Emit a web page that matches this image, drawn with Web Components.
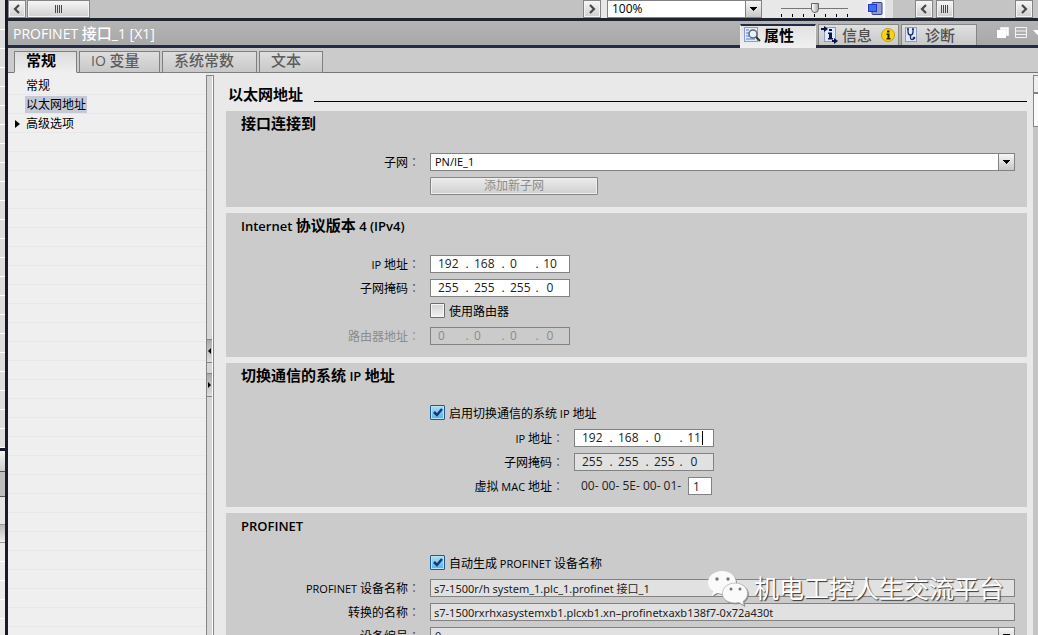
<!DOCTYPE html>
<html lang="zh-CN">
<head>
<meta charset="utf-8">
<title>PROFINET 接口_1 [X1]</title>
<style>
html, body { margin: 0; height: 100%; overflow: hidden; }
body { font-family: "Open Sans", "Noto Sans CJK SC", sans-serif; font-size: 12px; color: #000; background: #c9c9c9; }
</style>
</head>
<body>
<device-editor></device-editor>
<script>
const base = `
*, *::before, *::after { box-sizing: border-box; }
input, select, button { font: inherit; color: inherit; margin: 0; }
button { border: 0; background: none; padding: 0; }
.l { font-size: var(--latin, 11px); }
`;
/* Latin runs are set a little smaller than the Chinese text around them. */
const runs = t => t.replace(/[\x20-\x7e]+/g, m => `<span class="l">${m}</span>`);
const labelText = t => `${runs(t)}<span class="colon" lang="zh-Hant">：</span>`;

class Base extends HTMLElement {
  connectedCallback() {
    if (this.shadowRoot) return;
    this.attachShadow({ mode: 'open' }).innerHTML = `<style>${base}${this.css()}</style>${this.html()}`;
  }
  attr(n) { return this.getAttribute(n) || ''; }
  css() { return ''; }
  html() { return '<slot></slot>'; }
}
const define = (name, cls) => customElements.define(name, cls);

/* ---------- scroll bar pieces ---------- */
define('scroll-button', class extends Base {
  css() { return `
    :host { display: block; flex: none; width: 18px; height: 18px; }
    :host([kind=thumb][wide]) { width: 63px; }
    button { display: flex; align-items: center; justify-content: center; width: 100%; height: 100%;
      border: 1px solid #858585; background: linear-gradient(#f6f6f6, #cfcfcf); box-shadow: inset 0 0 0 1px #f4f4f4; }
    svg { display: block; fill: none; stroke: #484848; }`; }
  html() {
    const k = this.attr('kind');
    const d = { left: 'M8 2 4 6l4 4', right: 'M4 2l4 4-4 4', thumb: 'M2.5 2v8M4.5 2v8M6.5 2v8M8.5 2v8' }[k];
    return `<button aria-label="${k}"><svg width="12" height="12"><path d="${d}" stroke-width="${k === 'thumb' ? 1 : 2.2}"/></svg></button>`;
  }
});

define('top-bar', class extends Base {
  css() { return `
    :host { display: flex; height: 18px; background: #c2c2c2; }
    .track { display: flex; gap: 1px; }
    .canvas { flex: 1; justify-content: space-between; }
    .canvas div { display: flex; gap: 1px; }
    .zoom { display: flex; gap: 19px; background: #e8e8e8; padding-left: 6px; }
    drop-down { width: 155px; }
    .slider { width: 67px; position: relative; }
    .slider svg { display: block; }
    input { appearance: none; -webkit-appearance: none; position: absolute; inset: 0; width: 67px; height: 16px; background: none; }
    input::-webkit-slider-thumb { appearance: none; -webkit-appearance: none; width: 8px; height: 10px; background: linear-gradient(90deg,#fff,#aaa); border: 1px solid #666; border-radius: 0 0 4px 4px; }
    .fit { width: 18px; height: 18px; background: linear-gradient(#f2f2f2,#e8e8e8); border-right: 2px solid #fff; }
    .fit svg { display: block; }
    .side { width: 153px; padding-left: 6px; background: linear-gradient(90deg,#e2e2e2 8px,#c4c4c4 8px); }
    .side .track { gap: 3px; padding: 0 0 0 24px; }
    .side scroll-button:last-child { margin-left: auto; margin-right: 5px; }`; }
  html() { return `
    <div class="track canvas"><div><scroll-button kind="left"></scroll-button><scroll-button kind="thumb" wide></scroll-button></div><scroll-button kind="right"></scroll-button></div>
    <div class="zoom">
      <drop-down value="100%" name="缩放" zoom></drop-down>
      <div class="slider">
        <svg width="67" height="18" stroke="#000"><path d="M0 8.5h67" stroke="#777"/><path d="M.5 14v3M11.5 14v3M22.5 14v3M33.5 14v3M44.5 14v3M55.5 14v3M66.5 14v3"/></svg>
        <input type="range" aria-label="缩放级别" value="50">
      </div>
      <button class="fit" aria-label="适合窗口"><svg width="16" height="18"><rect x="5" y="2.500" width="10" height="12" rx="1" fill="#8f9bd2" stroke="#34408c"/><rect x="1.500" y="4.500" width="8" height="7" fill="#3f6cff" stroke="#2038c0"/></svg></button>
    </div>
    <div class="side"><div class="track"><scroll-button kind="left"></scroll-button><scroll-button kind="thumb"></scroll-button><scroll-button kind="right"></scroll-button></div></div>`; }
});

/* ---------- title bar ---------- */
const icons = {
  props: `<svg width="18" height="18"><rect x="1.500" y="1.500" width="13" height="14" fill="#dfe9fb" stroke="#8d9cc4"/><path d="M3 4h3M3 7h3M3 10h3M3 13h9" stroke="#4f7fd0"/><circle cx="10" cy="8" r="4" fill="#e6f2ff" stroke="#666" stroke-width="1.500"/><path d="M13 11l4 4" stroke="#333" stroke-width="2"/></svg>`,
  info: `<svg width="18" height="18"><rect x="3.500" y="1.500" width="11" height="14" fill="#dfe9fb" stroke="#8d9cc4"/><path d="M0 3h4M11 15h4" stroke="#0b1148" stroke-width="2"/><path d="M3 0l4 3-4 3zM13 12l4 3-4 3z" fill="#0b1148"/><path d="M8 3h3v2H8zM7 6.500h4V12h1v1.500H7V12h1V8H7z" fill="#0b1148"/></svg>`,
  diag: `<svg width="18" height="18"><rect x="1.500" y="1.500" width="11" height="14" fill="#dfe9fb" stroke="#8d9cc4"/><path d="M4 3v3c0 4 5 4 5 0V3M3 3h2M8 3h2M6.500 9v3c0 2 3 2 3.500 0" fill="none" stroke="#1c2c62" stroke-width="1.300"/><circle cx="10" cy="12" r="1.300" fill="#1c2c62"/></svg>`,
};
define('pane-tab', class extends Base {
  css() { return `
    :host { display: block; flex: none; height: 21px; margin-right: 2px; }
    button { display: flex; align-items: center; gap: 3px; width: 100%; height: 100%; padding: 0 0 1px 2px; font-size: 15px; font-weight: 500; line-height: 18px; color: #505050;
      background: linear-gradient(#e0e0e0, #c8c8c8); border: 1px solid #858585; border-width: 1px 1px 0 1px; white-space: nowrap; }
    :host([active]) { height: 24px; }
    :host([active]) button { background: linear-gradient(#e2e2e2,#f0f0f0); font-weight: 700; color: #000; border-color: #262b44 #efefef; border-top-width: 2px; padding-bottom: 5px; }
    svg { flex: none; }
    .badge { margin-left: 6px; }`; }
  html() {
    const badge = this.hasAttribute('badge') ? `<svg class="badge" width="14" height="14"><circle cx="7" cy="7" r="6.500" fill="#f7d514" stroke="#c79c00"/><path d="M6 2.500h2.500v2H6zM5.500 5.500h3V10h1v1.500h-4V10h1V7h-1z" fill="#222"/></svg>` : '';
    return `<button>${icons[this.attr('icon')]}<span><slot></slot></span>${badge}</button>`;
  }
});
define('title-bar', class extends Base {
  css() { return `
    :host { display: flex; align-items: flex-start; height: 27px; border-bottom: 3px solid #262b44; background: linear-gradient(#b4b4b4, #a8a8a8); --latin: 14px; }
    h1 { flex: 1; margin: 0; padding-left: 5px; font-size: 15px; line-height: 24px; font-weight: 500; color: #fff; white-space: nowrap; }
    .tabs { display: flex; padding-top: 3px; }
    .a { width: 76px; } .b { width: 81px; } .c { width: 76px; }
    .tools { display: flex; gap: 6px; padding: 6px 0 0 18px; width: 59px; overflow: hidden; }
    .tools button { flex: none; } svg { display: block; }`; }
  html() { return `
    <h1>${runs('PROFINET 接口_1 [X1]')}</h1>
    <div class="tabs"><pane-tab class="a" icon="props" active>属性</pane-tab><pane-tab class="b" icon="info" badge>信息</pane-tab><pane-tab class="c" icon="diag">诊断</pane-tab></div>
    <div class="tools">
      <button aria-label="浮动"><svg width="12" height="12"><path d="M3.500.5h8v8h-2v-6h-6z" fill="#fff" stroke="#eee"/><path d="M0 3h9v8H0z" fill="#fff"/></svg></button>
      <button aria-label="布局"><svg width="12" height="12"><path d="M.5.500h11v10H.500zM1 4h10M1 7.500h10" fill="none" stroke="#f4f4f4"/></svg></button>
      <button aria-label="折叠"><svg width="12" height="12"><path d="M0 3h9l-4.500 5z" fill="#fff"/></svg></button>
    </div>`; }
});

/* ---------- property tabs ---------- */
define('tab-strip', class extends Base {
  css() { return `
    :host { display: flex; align-items: flex-end; gap: 2px; height: 25px; padding-left: 6px; background: linear-gradient(#777,#777) 0 100% / 100% 1px no-repeat #cbcbcb; --latin: 14px; }
    button { height: 22px; padding: 0 0 3px 11px; border: 1px solid #808080; background: linear-gradient(#dedede,#c8c8c8); color: #5c5c5c; font-size: 15px; font-weight: 500; line-height: 17px; text-align: left; white-space: nowrap; }
    button.on { background: linear-gradient(#dcdcdc,#efefef); border-bottom-color: #efefef; color: #000; font-weight: 700; width: 63px; }
    .w81 { width: 81px; } .w95 { width: 95px; } .w64 { width: 64px; }`; }
  html() { return `<button class="on">常规</button><button class="w81">${runs('IO 变量')}</button><button class="w95">系统常数</button><button class="w64">文本</button>`; }
});

define('side-nav', class extends Base {
  css() { return `
    :host { display: block; width: 198px; padding-top: 3px; background: repeating-linear-gradient(#efefef 0 18px, #e8e8e8 18px 19px) 0 3px #efefef; }
    ul { list-style: none; margin: 0; padding: 0; }
    li { display: flex; align-items: center; height: 19px; }
    .mark { width: 17px; padding-left: 7px; } svg { display: block; }
    a { color: #000; text-decoration: none; line-height: 17px; padding: 0 1px; }
    a.on { background: #c3cad6; }`; }
  html() { return `<ul><li><span class="mark"></span><a href="#general">常规</a></li><li><span class="mark"></span><a class="on" href="#ethernet">以太网地址</a></li>
    <li><span class="mark"><svg width="5" height="8"><path d="M0 0l5 4-5 4z"/></svg></span><a href="#advanced">高级选项</a></li></ul>`; }
});

define('split-bar', class extends Base {
  css() { return `
    :host { display: flex; flex-direction: column; justify-content: center; gap: 10px; width: 8px; margin-top: 2px; padding-top: 24px; background: #d6d6d6; border: solid #858585; border-width: 1px 1px 0; box-shadow: inset -1px 0 #fff; }
    button { height: 24px; width: 5px; border: solid #858585; border-width: 1px 0; background: linear-gradient(#aaa,#ddd); display: grid; place-items: center; }
    svg { display: block; }`; }
  html() { return `<button aria-label="折叠"><svg width="3" height="8"><path d="M3 1v6L0 4z"/></svg></button><button aria-label="展开"><svg width="3" height="8"><path d="M0 1v6l3-3z"/></svg></button>`; }
});

/* ---------- controls ---------- */
const dropCss = `
  .drop { display: flex; width: 100%; height: 18px; position: relative; }
  .drop select { appearance: none; -webkit-appearance: none; width: 100%; height: 18px; padding: 0 18px 0 4px; border: 1px solid #828282; border-radius: 0; background: #fff; line-height: 16px; font-size: var(--drop-size, 11px); }
  .drop::after { content: ""; position: absolute; right: 0; top: 0; width: 17px; height: 18px; border: 1px solid #828282; pointer-events: none;
    background: linear-gradient(#000,#000) 4px 6px / 7px 1px no-repeat, linear-gradient(#000,#000) 5px 7px / 5px 1px no-repeat, linear-gradient(#000,#000) 6px 8px / 3px 1px no-repeat, linear-gradient(#000,#000) 7px 9px / 1px 1px no-repeat, linear-gradient(#f6f6f6,#c8c8c8); }
  .drop.off select { background: #e1e1e1; opacity: 1; color: #222; }`;
define('drop-down', class extends Base {
  css() { return `:host { display: block; }
    :host([zoom]) { --drop-size: 12px; }${dropCss}`; }
  html() { return `<div class="drop"><select aria-label="${this.attr('name')}"><option>${this.attr('value')}</option></select></div>`; }
});

/* One form line: a right-aligned label column followed by its control. */
const rowCss = `
  :host { display: grid; grid-template-columns: var(--label, 194px) minmax(0, 1fr); column-gap: 10px; height: 18px; }
  :host([shift]) { --label: 338px; }
  :host([disabled]) { color: #8c8c8c; }
  label { text-align: right; line-height: 18px; white-space: nowrap; }
  .colon { font-family: "Noto Sans CJK TC", sans-serif; color: #555; }
  :host([disabled]) .colon { color: #999; }
  input[type=text] { height: 18px; border: 1px solid #828282; background: #fff; padding: 0 3px; line-height: 16px; outline: 0; border-radius: 0; }
  input[readonly] { background: #e1e1e1; }`;

define('text-row', class extends Base {
  css() { return rowCss + `input[type=text] { width: 100%; font-family: "Noto Sans", "Noto Sans CJK SC", sans-serif; font-size: 11px; color: #222; }`; }
  html() { return `<label for="f">${labelText(this.attr('label'))}</label><input type="text" id="f" readonly value="${this.attr('value')}">`; }
});
define('select-row', class extends Base {
  css() { return rowCss + dropCss; }
  html() { return `<label for="f">${labelText(this.attr('label'))}</label><div class="drop ${this.hasAttribute('readonly') ? 'off' : ''}"><select id="f"><option>${this.attr('value')}</option></select></div>`; }
});
define('ip-row', class extends Base {
  css() { return rowCss + `
    .ip { display: flex; align-items: center; width: 140px; height: 18px; padding-left: 7px; border: 1px solid #828282; background: #fff; color: #222; }
    .ip input[type=text] { width: 22px; height: 16px; padding: 0; border: 0; background: none; }
    .ip input[type=text]:last-of-type { width: 16px; text-align: center; }
    .dot { width: 14px; text-align: center; line-height: 16px; }
    .dot:last-of-type { width: 10px; }
    .caret { width: 1px; height: 14px; background: #000; }
    :host([readonly]) .ip { background: #e1e1e1; }
    :host([disabled]) .ip { background: #cbcbcb; color: #8c8c8c; }`; }
  html() {
    const parts = this.attr('value').split('.');
    const dis = this.hasAttribute('disabled') ? 'disabled' : '';
    return `<label for="o0">${labelText(this.attr('label'))}</label><div class="ip">${parts.map((p, i) =>
      `<input type="text" id="o${i}" aria-label="${this.attr('label')} ${i + 1}" value="${p}" ${dis}>`).join('<span class="dot">.</span>')}${this.hasAttribute('caret') ? '<i class="caret"></i>' : ''}</div>`;
  }
});
define('mac-row', class extends Base {
  css() { return rowCss + `
    .mac { display: flex; padding-left: 7px; color: #222; line-height: 18px; font-size: 12px; }
    .mac span { width: 107px; white-space: nowrap; }
    .mac input[type=text] { width: 24px; padding-left: 4px; }`; }
  html() { return `<label for="f">${labelText(this.attr('label'))}</label><div class="mac"><span>${this.attr('prefix')}</span><input type="text" id="f" value="${this.attr('value')}"></div>`; }
});
define('check-row', class extends Base {
  css() { return `
    :host { display: flex; align-items: flex-start; height: 18px; padding-left: 204px; }
    label { display: flex; gap: 4px; line-height: 17px; white-space: nowrap; }
    input { appearance: none; -webkit-appearance: none; flex: none; width: 15px; height: 15px; border: 1px solid #6d6d6d; border-radius: 1px; background: linear-gradient(#d2d2d2,#f2f2f2); box-shadow: inset 0 0 0 1px #f6f6f6; }
    input:checked { border-color: #1f5a8c; box-shadow: inset 0 0 0 1px #b8e2f6;
      background: url('data:image/svg+xml,<svg xmlns="http://www.w3.org/2000/svg" width="13" height="13"><path d="M3 6l3 3 5-6" fill="none" stroke="%23123a78" stroke-width="2.500"/></svg>'), linear-gradient(#b4dcf2,#4fb4e8); }`; }
  html() { return `<label><input type="checkbox" ${this.hasAttribute('checked') ? 'checked' : ''}><span>${runs(this.attr('label'))}</span></label>`; }
});
define('button-row', class extends Base {
  css() { return `
    :host { display: flex; height: 18px; padding-left: 204px; }
    button { width: 168px; height: 18px; border: 1px solid #858585; border-radius: 1px; background: linear-gradient(#ececec,#cfcfcf); box-shadow: inset 0 0 0 1px #eee; color: #8c8c8c; line-height: 16px; }`; }
  html() { return `<button disabled><slot></slot></button>`; }
});

define('form-section', class extends Base {
  css() { return `
    :host { display: flex; flex-direction: column; gap: 6px; padding: 0 12px 12px 0; background: #cbcbcb; --latin: 13px; }
    h3 { margin: 0; height: 36px; padding: 0 0 0 15px; font-size: 15px; font-weight: 700; line-height: 24px; }
    .l { font-weight: 600; }
    ::slotted(*) { --latin: 11px; }`; }
  html() { return `<h3>${runs(this.attr('heading'))}</h3><slot></slot>`; }
});

define('property-form', class extends Base {
  css() { return `
    :host { display: flex; flex-direction: column; gap: 6px; flex: 1; min-width: 0; padding: 0 6px 0 12px; background: #e9e9e9; overflow: hidden; }
    header { display: flex; align-items: center; gap: 11px; flex: none; height: 32px; }
    h2 { margin: 0; padding: 10px 0 0 2px; font-size: 15px; font-weight: 700; line-height: 22px; }
    hr { flex: 1; margin: 24px 0 0; border: 0; border-top: 1px solid #000; }
    form-section { flex: none; }`; }
  html() { return `
    <header><h2>以太网地址</h2><hr></header>
    <form-section heading="接口连接到">
      <select-row label="子网" value="PN/IE_1"></select-row>
      <button-row>添加新子网</button-row>
    </form-section>
    <form-section heading="Internet 协议版本 4 (IPv4)">
      <ip-row label="IP 地址" value="192.168.0.10"></ip-row>
      <ip-row label="子网掩码" value="255.255.255.0"></ip-row>
      <check-row label="使用路由器"></check-row>
      <ip-row label="路由器地址" value="0.0.0.0" disabled></ip-row>
    </form-section>
    <form-section heading="切换通信的系统 IP 地址">
      <check-row label="启用切换通信的系统 IP 地址" checked></check-row>
      <ip-row shift label="IP 地址" value="192.168.0.11" caret></ip-row>
      <ip-row shift label="子网掩码" value="255.255.255.0" readonly></ip-row>
      <mac-row shift label="虚拟 MAC 地址" prefix="00- 00- 5E- 00- 01-" value="1"></mac-row>
    </form-section>
    <form-section heading="PROFINET">
      <check-row label="自动生成 PROFINET 设备名称" checked></check-row>
      <text-row label="PROFINET 设备名称" value="s7-1500r/h system_1.plc_1.profinet 接口_1"></text-row>
      <text-row label="转换的名称" value="s7-1500rxrhxasystemxb1.plcxb1.xn–profinetxaxb138f7-0x72a430t"></text-row>
      <select-row label="设备编号" value="0" readonly></select-row>
    </form-section>`; }
});

define('v-scroll', class extends Base {
  css() { return `
    :host { display: block; width: 5px; margin-top: 2px; background: #c4c4c4; overflow: hidden; }
    button { display: block; width: 18px; height: 18px; border: 1px solid #858585; background: #eee; }
    .thumb { height: 34px; background: linear-gradient(90deg,#fff,#ddd); }`; }
  html() { return `<button aria-label="向上"></button><button class="thumb" aria-label="滚动"></button>`; }
});

define('edge-strip', class extends Base {
  css() { return `
    :host { display: flex; flex-direction: column; width: 8px; border-right: 3px solid #171b2c; }
    .rows { height: 448px; background: repeating-linear-gradient(#dedede 0 18px, #fff 18px 19px) 0 11px; }
    .rule { height: 3px; background: #171b2c; }
    .a { height: 20px; background: linear-gradient(#f2f2f2,#ccc); }
    .b { height: 26px; background: #bdbdbd; border: solid #555; border-width: 1px 0; }
    .c { height: 27px; background: #e6e6e6; }
    .d { height: 19px; background: linear-gradient(#bbb,#eee); border: solid #999; border-width: 1px 0; }
    .rest { flex: 1; background: repeating-linear-gradient(#ececec 0 18px, #fff 18px 19px); }`; }
  html() { return `<div class="rows"></div><div class="rule"></div><div class="a"></div><div class="b"></div><div class="c"></div><div class="d"></div><div class="rest"></div>`; }
});

define('channel-mark', class extends Base {
  css() { return `
    :host { position: absolute; right: 34px; bottom: 29px; display: flex; align-items: center; gap: 6px; color: #fff; font-size: 25px; line-height: 36px; white-space: nowrap; text-shadow: 1px 1px 1px #333; pointer-events: none; }
    svg { display: block; filter: drop-shadow(1px 1px 0 #888); }`; }
  html() { return `<svg width="40" height="36" fill="#fafafa"><path d="M14 1C6 1 0 6 0 12.500c0 4 2 7 5 9L4 26l5-3 5 1c8 0 14-5 14-11.500S22 1 14 1z"/><path d="M27 13c-7 0-12.500 4.500-12.500 10.500S20 33 27 33l4-.5 5 3-1-4c3-2 4.500-5 4.500-8C39.500 17.500 34 13 27 13z" stroke="#aaa" stroke-width=".7"/><g fill="#777"><circle cx="9" cy="9" r="1.700"/><circle cx="20" cy="9" r="1.700"/><circle cx="23" cy="19" r="1.500"/><circle cx="32" cy="19" r="1.500"/></g></svg><span>机电工控人生交流平台</span>`; }
});

define('device-editor', class extends Base {
  css() { return `
    :host { display: flex; height: 100vh; position: relative; overflow: hidden; }
    main { flex: 1; min-width: 0; display: flex; flex-direction: column; }
    .rule { height: 3px; background: #20242f; }
    .body { flex: 1; min-height: 0; display: flex; background: #e9e9e9; }
    edge-strip, side-nav, split-bar, v-scroll { flex: none; }`; }
  html() { return `<edge-strip></edge-strip><main><top-bar></top-bar><div class="rule"></div><title-bar></title-bar><tab-strip></tab-strip>
    <div class="body"><side-nav></side-nav><split-bar></split-bar><property-form></property-form><v-scroll></v-scroll></div></main><channel-mark></channel-mark>`; }
});
</script>
</body>
</html>
